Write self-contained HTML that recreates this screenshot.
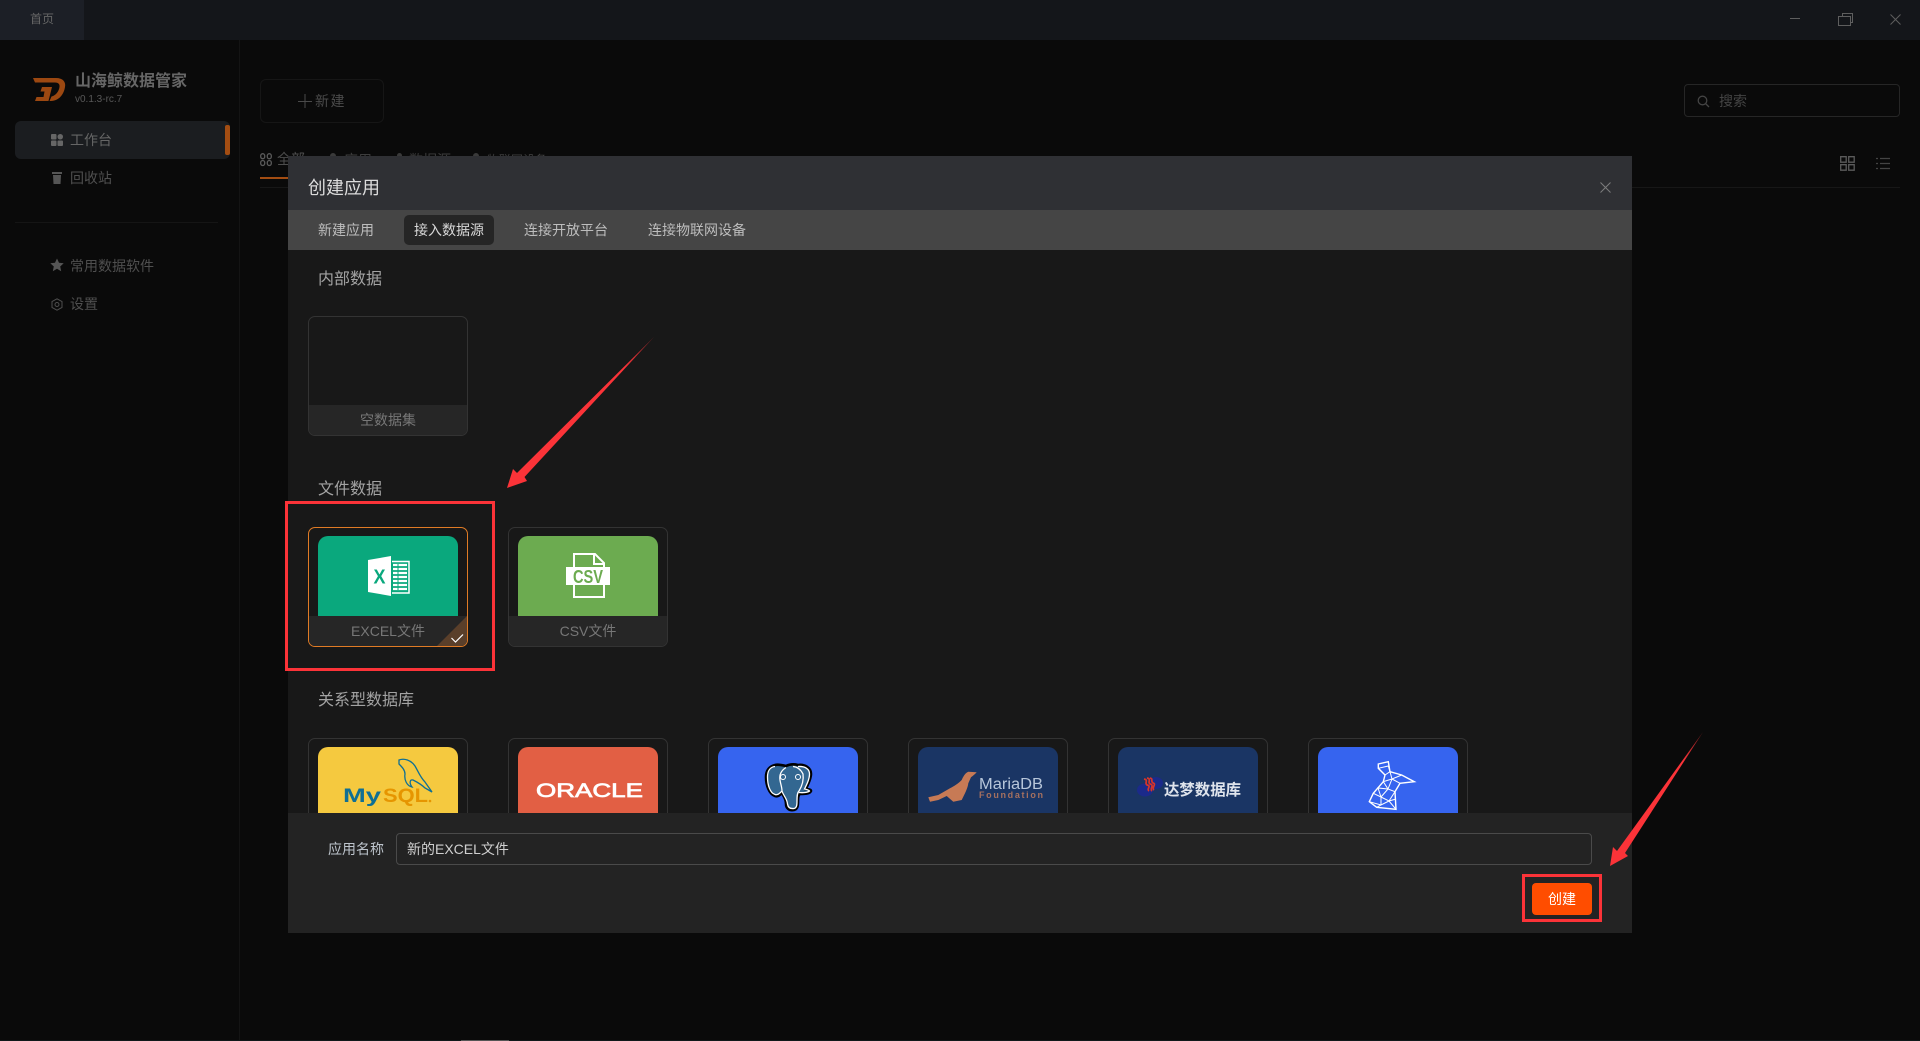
<!DOCTYPE html>
<html lang="zh"><head><meta charset="utf-8"><title>山海鲸数据管家</title>
<style>
*{box-sizing:border-box}
html,body{margin:0;padding:0;width:1920px;height:1041px;overflow:hidden;background:#0a0a0a;font-family:"Liberation Sans","Noto Sans CJK SC",sans-serif}
.a{position:absolute}
.t{position:absolute;white-space:nowrap;line-height:20px;height:20px;font-size:14px}
.card{position:absolute;width:160px;height:120px;border:1px solid #333;border-radius:7px;overflow:hidden;background:#181818}
.card .img{position:absolute;left:9px;top:8px;width:140px;height:80px;border-radius:10px 10px 0 0;overflow:hidden}
.card .lb{position:absolute;left:0;right:0;bottom:0;height:30px;background:#262626;color:#777;text-align:center;font-size:14px;line-height:31px}
.sec{position:absolute;left:318px;font-size:16px;line-height:22px;height:22px;color:#a3a3a3;white-space:nowrap}
.tab{position:absolute;top:220px;font-size:14px;line-height:20px;color:#bdbdbd;white-space:nowrap}
svg{display:block;overflow:visible}
</style></head><body>

<!-- title bar -->
<div class="a" style="left:0;top:0;width:1920px;height:40px;background:#14161a"></div>
<div class="a" style="left:0;top:0;width:84px;height:40px;background:#1c1f26"></div>
<div class="t" style="left:30px;top:9px;font-size:12px;color:#666">首页</div>
<svg class="a" style="left:1780px;top:8px" width="130" height="24" fill="none" stroke="#5e5e5e" stroke-width="1">
<path d="M10 10.500H20"/><path d="M58.500 8.500h12v9h-12zM62.500 8.500V5.500h10v9h-2"/><path d="M110.500 6.500l10 10M120.500 6.500l-10 10"/></svg>

<!-- sidebar -->
<div class="a" style="left:239px;top:40px;width:1px;height:1001px;background:#141414"></div>
<svg class="a" style="left:33px;top:77px" width="33" height="25" viewBox="0 0 33 25" fill="#9c4811">
<path d="M0 1H23C30 1 33 5 32 10C31 17 26 24 18 24H16.500L18.500 19.500C23 18.500 26 14 26.500 10C27 7 25 5.500 22 5.500H2Z"/>
<path d="M9 10H19L15.500 24H2L3.500 20H10.500L11.500 14.500H7.500Z"/></svg>
<div class="t" style="left:75px;top:72px;font-size:16px;font-weight:700;color:#666">山海鲸数据管家</div>
<div class="t" style="left:75px;top:90px;font-size:10px;color:#585858">v0.1.3-rc.7</div>

<div class="a" style="left:15px;top:121px;width:215px;height:38px;background:#1b1d20;border-radius:6px"></div>
<div class="a" style="left:225px;top:125px;width:5px;height:30px;background:#a34d12;border-radius:2px"></div>
<svg class="a" style="left:51px;top:134px" width="12" height="12" fill="#666"><rect width="5.500" height="5.500" rx="1"/><rect x="6.500" width="5.500" height="5.500" rx="2.700"/><rect y="6.500" width="5.500" height="5.500" rx="1"/><rect x="6.500" y="6.500" width="5.500" height="5.500" rx="1"/></svg>
<div class="t" style="left:70px;top:130px;color:#666">工作台</div>

<svg class="a" style="left:52px;top:171px" width="10" height="14" fill="#555"><path d="M0 1H10V3H0ZM1 4H9L8.500 13H1.500Z"/></svg>
<div class="t" style="left:70px;top:168px;color:#4f4f4f">回收站</div>
<div class="a" style="left:15px;top:222px;width:203px;height:1px;background:#151515"></div>
<svg class="a" style="left:50px;top:258px" width="14" height="14" fill="#555"><path d="M7 0.500L9 4.800 13.700 5.300 10.200 8.500 11.200 13.200 7 10.800 2.800 13.200 3.800 8.500 0.300 5.300 5 4.800Z"/></svg>
<div class="t" style="left:70px;top:256px;color:#4f4f4f">常用数据软件</div>
<svg class="a" style="left:51px;top:298px" width="12" height="13" fill="none" stroke="#4f4f4f"><path d="M6 .8L11 3.500V9.500L6 12.200 1 9.500V3.500Z"/><circle cx="6" cy="6.500" r="2"/></svg>
<div class="t" style="left:70px;top:294px;color:#4f4f4f">设置</div>

<!-- main behind -->
<div class="a" style="left:260px;top:79px;width:124px;height:44px;border:1px solid #161616;border-radius:6px"></div>
<svg class="a" style="left:298px;top:94px" width="14" height="14" stroke="#4a4a4a" fill="none"><path d="M7 0V14M0 7.500H14"/></svg>
<div class="t" style="left:315px;top:91px;color:#4a4a4a;letter-spacing:1.500px">新建</div>

<div class="a" style="left:1684px;top:84px;width:216px;height:33px;border:1px solid #262626;border-radius:4px"></div>
<svg class="a" style="left:1697px;top:95px" width="13" height="13" fill="none" stroke="#444" stroke-width="1.300"><circle cx="5.500" cy="5.500" r="4.300"/><path d="M8.500 8.500L12 12"/></svg>
<div class="t" style="left:1719px;top:91px;color:#444">搜索</div>

<svg class="a" style="left:260px;top:153px" width="12" height="13" fill="none" stroke="#5a5a5a" stroke-width="1.300"><rect x=".7" y=".7" width="4" height="5" rx="2"/><rect x="7.300" y=".7" width="4" height="5" rx="2"/><rect x=".7" y="7.500" width="4" height="5" rx="2"/><rect x="7.300" y="7.500" width="4" height="5" rx="2"/></svg>
<div class="t" style="left:277px;top:149px;color:#4d4d4d">全部</div>
<div class="a" style="left:330px;top:153px;width:6px;height:3px;background:#3a3a3a;border-radius:3px 3px 0 0"></div>
<div class="t" style="left:344px;top:149.500px;color:#3d3d3d">应用</div>
<div class="a" style="left:397px;top:153px;width:5px;height:3px;background:#3a3a3a;border-radius:3px 3px 0 0"></div>
<div class="t" style="left:409px;top:149.500px;color:#3d3d3d">数据源</div>
<div class="a" style="left:473px;top:153px;width:6px;height:3px;background:#3a3a3a;border-radius:3px 3px 0 0"></div>
<div class="t" style="left:487px;top:149.500px;font-size:12px;letter-spacing:0;color:#3d3d3d">物联网设备</div>
<div class="a" style="left:260px;top:177px;width:30px;height:2px;background:#a34d12"></div>
<div class="a" style="left:260px;top:187px;width:1640px;height:1px;background:#171717"></div>
<svg class="a" style="left:1840px;top:156px" width="50" height="15" fill="none" stroke="#5b5b5b" stroke-width="1.300"><path d="M.7.700h5.500v5.500H.7zM8.700.700h5.500v5.500H8.700zM.7 8.700h5.500v5.500H.7zM8.700 8.700h5.500v5.500H8.700z"/><path stroke="#444" d="M36 2.500h2M40 2.500h10M36 7.500h2M40 7.500h10M36 12.500h2M40 12.500h10"/></svg>

<!-- bottom sliver -->
<div class="a" style="left:0;top:1040px;width:1920px;height:1px;background:#10181a"></div>
<div class="a" style="left:461px;top:1040px;width:48px;height:1px;background:#555"></div>

<!-- modal -->
<div class="a" style="left:288px;top:156px;width:1344px;height:777px;background:#181818;overflow:hidden">
  <div class="a" style="left:0;top:0;width:1344px;height:54px;background:#2f3034"></div>
  <div class="a" style="left:0;top:54px;width:1344px;height:40px;background:#454545"></div>
</div>
<div class="t" style="left:308px;top:178px;font-size:18px;color:#dcdcdc">创建应用</div>
<svg class="a" style="left:1600px;top:182px" width="11" height="11" stroke="#7d7d7d" fill="none"><path d="M.5.5l10 10M10.500.5l-10 10"/></svg>
<div class="a" style="left:404px;top:215px;width:90px;height:30px;background:#252525;border-radius:5px"></div>
<div class="tab" style="left:318px">新建应用</div>
<div class="tab" style="left:414px;color:#d8d8d8">接入数据源</div>
<div class="tab" style="left:524px">连接开放平台</div>
<div class="tab" style="left:648px">连接物联网设备</div>

<div class="sec" style="top:268.500px">内部数据</div>
<div class="card" style="left:308px;top:316px"><div class="lb">空数据集</div></div>

<div class="sec" style="top:478.500px">文件数据</div>
<div class="card" style="left:308px;top:527px;border-color:#e07b25">
  <div class="img" style="background:#0aa87d"></div>
  <div class="lb">EXCEL文件</div>
  <svg class="a" style="left:128px;top:88px" width="30" height="30"><path d="M30 0V30H0Z" fill="#5a3f2a"/><path d="M14.500 22L18.500 26 26 18.500" fill="none" stroke="#fff" stroke-width="1.200"/></svg>
</div>
<svg class="a" style="left:368px;top:556px" width="42" height="41" viewBox="0 0 42 41">
<path d="M0 4L23 0V40L0 36Z" fill="#fff"/>
<path d="M24 5.500H41V37H24" fill="none" stroke="#fff" stroke-width="1.500"/>
<path d="M25 9h14M25 13h14M25 17h14M25 21h14M25 25h14M25 29h14M25 33h14" stroke="#fff" stroke-width="2.200"/>
<path d="M30 8V34" stroke="#0aa87d" stroke-width="1"/>
<text x="5.500" y="27.500" font-family="Liberation Sans" font-weight="700" font-size="20" textLength="12" lengthAdjust="spacingAndGlyphs" fill="#0aa87d">X</text>
</svg>
<div class="card" style="left:508px;top:527px">
  <div class="img" style="background:#6cab50"></div>
  <div class="lb">CSV文件</div>
</div>
<svg class="a" style="left:566px;top:553px" width="44" height="45" viewBox="0 0 44 45">
<path d="M8 14V1H29L38 10V14M38 32V44H8V32" fill="none" stroke="#fff" stroke-width="2"/>
<path d="M28 1V11H38" fill="none" stroke="#fff" stroke-width="2"/>
<rect x="0" y="14" width="44" height="18" fill="#fff"/>
<text x="7" y="30" font-family="Liberation Sans" font-weight="700" font-size="18" textLength="30" lengthAdjust="spacingAndGlyphs" fill="#6cab50">CSV</text>
</svg>

<div class="sec" style="top:690px">关系型数据库</div>
<!-- db cards clipped -->
<div class="a" style="left:288px;top:730px;width:1344px;height:83px;overflow:hidden">
  <div class="card" style="left:20px;top:8px"><div class="img" style="background:#f5c93f"></div></div>
  <div class="card" style="left:220px;top:8px"><div class="img" style="background:#e25f44"></div></div>
  <div class="card" style="left:420px;top:8px"><div class="img" style="background:#3664ef"></div></div>
  <div class="card" style="left:620px;top:8px"><div class="img" style="background:#1a3564"></div></div>
  <div class="card" style="left:820px;top:8px"><div class="img" style="background:#1a3564"></div></div>
  <div class="card" style="left:1020px;top:8px"><div class="img" style="background:#3664ef"></div></div>
</div>

<!-- MySQL -->
<svg class="a" style="left:340px;top:755px" width="95" height="55" viewBox="0 0 95 55">
<text x="3" y="47" font-family="Liberation Sans" font-weight="700" font-size="19" textLength="38" lengthAdjust="spacingAndGlyphs" fill="#0f6f94">My</text>
<text x="43" y="47" font-family="Liberation Sans" font-weight="700" font-size="19" textLength="45" lengthAdjust="spacingAndGlyphs" fill="#e69500">SQL</text>
<circle cx="90" cy="46" r="1.300" fill="#e69500"/>
<path d="M59 5C64 3 71 5 75 11C78 16 80 22 85 27L92 37 85 33C81 29 77 27 73 25C70 24 69 28 72 32 67 31 64 25 65 19 65 15 62 12 59 9Z" fill="none" stroke="#0f6f94" stroke-width="1.300"/>
</svg>
<!-- Oracle -->
<svg class="a" style="left:530px;top:775px" width="120" height="30" viewBox="0 0 120 30">
<text x="6" y="22" font-family="Liberation Sans" font-size="19.500" stroke="#fff" stroke-width=".7" textLength="107" lengthAdjust="spacingAndGlyphs" fill="#fff">ORACLE</text></svg>
<!-- Postgres -->
<svg class="a" style="left:765px;top:763px" width="48" height="50" viewBox="0 0 48 50">
<path d="M10 2C5 3 1 7 1 14C1 22 4 31 10 33C13 34 15 32 17 30C18 33 21 35 21 41C21 45 24 48 29 47C33 46 33 42 33 38C33 35 33 32 35 31C39 31 45 31 46 28C46 26 42 26 41 26C43 21 46 16 46 11C46 5 40 1 33 2C29 1 25 1 21 3C17 2 13 1 10 2Z" fill="#336791" stroke="#000" stroke-width="2.600"/>
<path d="M10 3.500C5 4 2.500 8 2.500 14C2.500 22 5 30 10 31.500C13 32.500 15 30 17 28M33 3.500C40 3 44.500 6 44.500 11C44.500 16 42 21 39.500 26C42 26.500 44 27 44.500 28C43 29.500 38 30 34 29.500M21 4.500C17 7 14 11 15 17C15.500 21 17 24 17 28C18.500 33 22 35 22.500 41C23 44.500 25 46 29 45.500C32 45 32 41 32 38C32 34 32 30 34 28C37 23 39 18 38 11C36 7 33 4 28 3.500" fill="none" stroke="#fff" stroke-width="1.300"/>
<circle cx="18" cy="14" r="2.500" fill="none" stroke="#fff"/><circle cx="33" cy="14" r="2.500" fill="none" stroke="#fff"/>
</svg>
<!-- MariaDB -->
<svg class="a" style="left:925px;top:768px" width="122" height="40" viewBox="0 0 122 40">
<path d="M51.700 4.300L43.300 3.700C40 5 38 9 36.700 12C33 16 29 18 25 20.300L13.300 27 3.300 29.300 5 33.700 13.300 32 21.700 28 28.300 33.700 36.700 32 40 25.300C42 21 43 18 43.300 15.300L46 9.300C48 8 50 6 51.700 4.300Z" fill="#c77a55"/>
<text x="54" y="21" font-family="Liberation Sans" font-size="15.500" textLength="64" lengthAdjust="spacingAndGlyphs" fill="#b7c6da">MariaDB</text>
<text x="54" y="30" font-family="Liberation Sans" font-weight="700" font-size="9" textLength="64" fill="#a5705f">Foundation</text>
</svg>
<!-- Dameng -->
<svg class="a" style="left:1136px;top:775px" width="110" height="28" viewBox="0 0 110 28">
<ellipse cx="9" cy="15" rx="8" ry="6.500" fill="#1b2a8a"/><ellipse cx="20" cy="8" rx="7" ry="6" fill="#1b2a8a"/>
<path d="M8 4C13 5 8 8 11 10C16 11 10 14 13 16M11 3C16 4 11 7 14 9C19 10 13 14 16 16M14 3C18 4 14 6 17 8C21 9 15 13 18 15" fill="none" stroke="#d8352a" stroke-width="1.700"/>
<text x="28" y="20" font-family="Liberation Sans,Noto Sans CJK SC,sans-serif" font-weight="700" font-size="15.500" textLength="77" lengthAdjust="spacingAndGlyphs" fill="#dfe4ec">达梦数据库</text>
</svg>
<!-- SQL Server -->
<svg class="a" style="left:1368px;top:761px" width="48" height="50" viewBox="0 0 48 50" fill="none" stroke="#fff" stroke-width="1">
<path d="M10.300 3L20.300 .7 22 10.700 33.700 14 46.300 20.700 32 22.300 27 30.700 28 48.300 8.700 46.300 1.300 40.700 5.300 32.300 15.300 20.700 17 14 10.300 7.300Z" stroke-width="1.400"/>
<path d="M10.300 7.300L20.300 5 22 10.700 17 14M22 10.700L24 18 33.700 14M24 18L32 22.300M24 18L15.300 20.700 20 28 27 30.700M20 28L24 18M20 28L10 27 13 36 5.300 32.300M13 36L20 28M13 36L21 40 27 30.700M21 40L28 48.300M21 40L13 44 1.300 40.700M13 36L13 44 8.700 46.300M21 40L28 38"/>
</svg>

<!-- footer -->
<div class="a" style="left:288px;top:813px;width:1344px;height:120px;background:#232323"></div>
<div class="t" style="left:328px;top:839px;color:#bdc4cc">应用名称</div>
<div class="a" style="left:396px;top:833px;width:1196px;height:32px;border:1px solid #4a4a4a;border-radius:4px"></div>
<div class="t" style="left:407px;top:839px;color:#cfcfcf">新的EXCEL文件</div>
<div class="a" style="left:1532px;top:883px;width:60px;height:32px;background:#ff4d00;border-radius:4px;color:#fff;font-size:14px;line-height:32px;text-align:center">创建</div>

<!-- annotations -->
<div class="a" style="left:285px;top:501px;width:210px;height:170px;border:3px solid #fb3338"></div>
<div class="a" style="left:1522px;top:874px;width:80px;height:48px;border:3px solid #fb3338"></div>
<svg class="a" style="left:0;top:0" width="1920" height="1041">
<defs>
<linearGradient id="g1" gradientUnits="userSpaceOnUse" x1="654" y1="337" x2="625" y2="368"><stop offset="0" stop-color="#fb3338" stop-opacity=".45"/><stop offset="1" stop-color="#fb3338"/></linearGradient>
<linearGradient id="g2" gradientUnits="userSpaceOnUse" x1="1703" y1="732" x2="1683" y2="762"><stop offset="0" stop-color="#fb3338" stop-opacity=".45"/><stop offset="1" stop-color="#fb3338"/></linearGradient>
</defs>
<path d="M654 337L524.500 477 527 481 507 488 513 469 517 473Z" fill="url(#g1)"/>
<path d="M1703 732L1625 853 1628 856 1610 866 1613 847 1617 851Z" fill="url(#g2)"/>
</svg>
</body></html>
